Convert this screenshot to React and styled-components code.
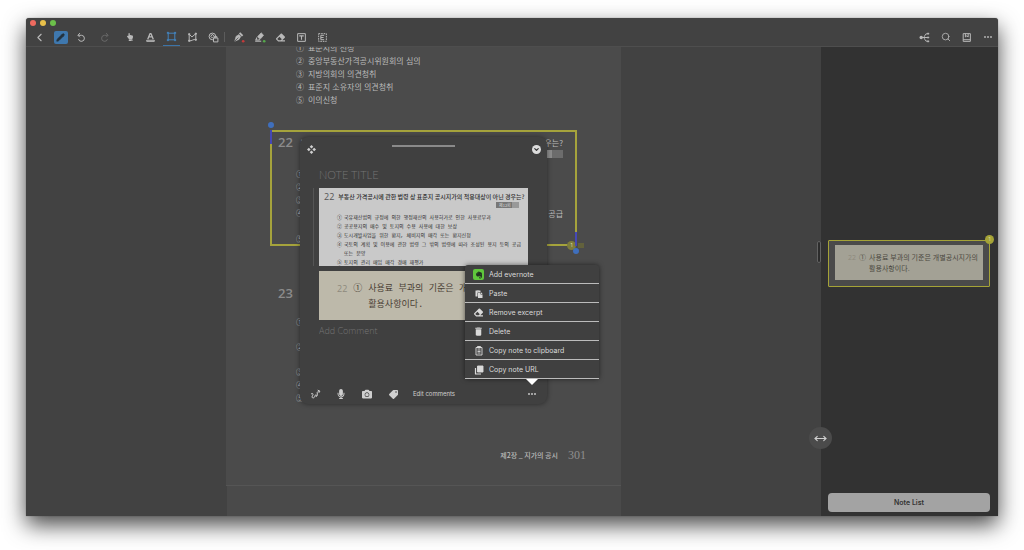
import styled, { createGlobalStyle } from "styled-components";
import {
  ChevronLeft,
  ChevronDown,
  Search,
  MoveHorizontal,
  Pencil,
} from "lucide-react";
import {
  FaCamera,
  FaEraser,
  FaEvernote,
  FaHandPointUp,
  FaMicrophone,
  FaPaste,
  FaTag,
} from "react-icons/fa";
import { MdDelete } from "react-icons/md";

const GlobalStyle = createGlobalStyle`
  * {
    box-sizing: border-box;
  }

  body {
    margin: 0;
    background: white;
    font-family: Inter, "Noto Sans CJK KR", sans-serif;
  }

  button, input, textarea {
    margin: 0;
    padding: 0;
    border: none;
    background: none;
    font: inherit;
    color: inherit;
  }

  button {
    cursor: pointer;
  }

  ol, ul, p, h1, h2 {
    margin: 0;
    padding: 0;
    list-style: none;
    font-weight: normal;
  }
`;

const pageFont = `"Liberation Sans", "Noto Sans CJK KR", sans-serif`;
const clippingFont = `"Liberation Mono", "Noto Sans CJK KR", sans-serif`;

const Desktop = styled.div`
  display: flex;
  min-height: 100vh;
  padding: 18px 26px 34px;
  overflow: hidden;
`;

const Window = styled.div`
  display: flex;
  flex-direction: column;
  flex: 1;
  min-width: 0;
  background: #424242;
  border-radius: 3px 3px 0 0;
  box-shadow: 0 0 1px rgba(0, 0, 0, 0.6), 0 9px 22px rgba(0, 0, 0, 0.72);
`;

/* Title bar and tools */

const Header = styled.header`
  border-bottom: 1px solid #4e4e4e;
`;

const TrafficLights = styled.div`
  display: flex;
  gap: 4px;
  height: 10px;
  padding: 2px 4px;
`;

const Light = styled.span`
  width: 6px;
  height: 6px;
  border-radius: 50%;
  background: ${({ color }) => color};
`;

const Toolbar = styled.nav`
  display: flex;
  align-items: center;
  height: 18px;
  padding-left: 3px;
`;

const ToolGroup = styled.div`
  display: flex;
  align-items: center;
  margin-left: ${({ $gap }) => $gap || 0}px;
`;

const Tool = styled.button`
  display: flex;
  align-items: center;
  justify-content: center;
  width: 21px;
  height: 18px;
  color: ${({ $faded }) => ($faded ? "#686868" : "#b9b9b9")};
`;

const SelectedTool = styled(Tool)`
  width: 17px;
  margin: 0 2px;
  border-bottom: 1px solid #3c74a8;
`;

const ActiveTool = styled.span`
  display: flex;
  align-items: center;
  justify-content: center;
  width: 14px;
  height: 13px;
  border-radius: 2px;
  background: #3f78ae;
  color: #24313c;
`;

const Separator = styled.span`
  width: 1px;
  height: 10px;
  background: #5c5c5c;
`;

const Grow = styled.div`
  flex: 1;
`;

/* Document */

const Main = styled.main`
  position: relative;
  display: flex;
  flex: 1;
  min-height: 0;
`;

const Canvas = styled.section`
  display: flex;
  flex: 1;
  justify-content: center;
  min-width: 0;
  overflow: hidden;
`;

const PageColumn = styled.div`
  display: flex;
  flex-direction: column;
  width: 395px;
`;

const Page = styled.article`
  position: relative;
  padding: 0 44px 22px;
  background: #4b4b4b;
  border-bottom: 1px solid #555;
  color: #bababa;
  font-family: ${pageFont};
  font-size: 8px;
  line-height: 13px;
`;

const NextPage = styled.div`
  flex: 1;
  margin-left: 1px;
  background: #4a4a4a;
`;

const Answers = styled.ol`
  margin: -5px 0 23px 26px;
`;

const Item = styled.li`
  display: flex;
  gap: 4px;
  white-space: nowrap;
`;

const Question = styled.section`
  position: relative;
  height: 116px;
  padding: 2px 12px 0 6px;
  border: 2px solid #a5a33c;
`;

const QuestionHead = styled.div`
  display: flex;
  align-items: center;
  gap: 7px;
  height: 16px;
`;

const QuestionNumber = styled.span`
  color: #8b8b8b;
  font-family: "Open Sans", sans-serif;
  font-size: 13px;
  font-weight: 600;
`;

const Justified = styled.p`
  flex: 1;
  font-family: "Noto Sans CJK KR", sans-serif;
  text-align: justify;
  text-align-last: justify;
`;

const PageBadge = styled.div`
  width: 44px;
  height: 8px;
  margin: 0 0 10px auto;
  background: linear-gradient(90deg, #8d8d8d 75%, #6c6c6c 75%);
`;

const QuestionOptions = styled.ol`
  padding-left: 18px;
`;

const NextQuestion = styled.section`
  height: 160px;
  margin-top: 39px;
  padding: 0 12px 0 8px;
`;

const NextOptions = styled.ol`
  display: grid;
  gap: 12px;
  margin: 15px 0 0 18px;
`;

const TightOptions = styled.ol`
  margin-left: 18px;
`;

const Handle = styled.span`
  position: absolute;
  width: 2px;
  height: 14px;
  background: #4548b5;
  ${({ $end }) => ($end ? "right: -2px; bottom: -2px;" : "left: -2px; top: -2px;")}

  &::after {
    content: "";
    position: absolute;
    left: -2px;
    ${({ $end }) => ($end ? "bottom: -8px;" : "top: -8px;")}
    width: 6px;
    height: 6px;
    border-radius: 50%;
    background: #3f6fbd;
  }
`;

const CountBadge = styled.span`
  position: absolute;
  right: ${({ $right }) => $right}px;
  ${({ $low }) => ($low ? "bottom: -6px;" : "top: -6px;")}
  width: 9px;
  height: 9px;
  border-radius: 50%;
  background: ${({ $low }) => ($low ? "#7d7c3c" : "#a5a337")};
  color: #d8d8a0;
  font: 5px/9px Inter, sans-serif;
  text-align: center;
`;

const CommentMark = styled.span`
  position: absolute;
  right: -9px;
  bottom: -4px;
  width: 6px;
  height: 5px;
  background: #62613c;
`;

const PageFooter = styled.footer`
  display: flex;
  align-items: center;
  justify-content: flex-end;
  gap: 10px;
  margin: 2px -9px 0 0;
  font-family: "Noto Sans CJK KR", sans-serif;
  font-size: 7px;
  font-weight: 500;
`;

const PageNumber = styled.span`
  color: #8f8f8f;
  font: 12px/16px "Liberation Serif", serif;
`;

/* Note popover */

const Note = styled.section`
  position: absolute;
  left: 74px;
  top: 90px;
  width: 247px;
  border-radius: 8px;
  background: #404040;
  box-shadow: 0 0 5px rgba(0, 0, 0, 0.45);
  color: #cfcfcf;
`;

const NoteHeader = styled.div`
  display: flex;
  align-items: center;
  justify-content: space-between;
  height: 24px;
  padding: 0 6px;
`;

const Grabber = styled.span`
  width: 63px;
  height: 2px;
  margin-bottom: 7px;
  background: #8a8a8a;
`;

const IconButton = styled.button`
  display: flex;
  align-items: center;
  justify-content: center;
  width: ${({ $width }) => $width || 10}px;
  height: 20px;
  color: #cfcfcf;
`;

const Collapse = styled.span`
  display: flex;
  align-items: center;
  justify-content: center;
  width: 9px;
  height: 9px;
  border-radius: 50%;
  background: #dcdcdc;
  color: #333;
`;

const NoteBody = styled.div`
  display: flex;
  flex-direction: column;
  padding: 0 19px;
`;

const TitleInput = styled.input`
  width: 100%;
  height: 27px;
  font: 300 11px/20px Lato, sans-serif;
  outline: none;

  &::placeholder {
    color: #747474;
    opacity: 1;
  }
`;

const CommentInput = styled.textarea`
  height: 64px;
  padding-top: 4px;
  font: 300 9px/14px "Open Sans", sans-serif;
  resize: none;
  outline: none;

  &::placeholder {
    color: #747474;
    opacity: 1;
  }
`;

const Excerpt = styled.div`
  height: 78px;
  margin-bottom: 5px;
  padding: 3px 3px 0 5px;
  background: #c9c9c9;
  box-shadow: -5px 0 0 #404040, -6px 0 0 #555;
  color: #2c2c2c;
  font-family: ${clippingFont};
  font-size: 5px;
  line-height: 9px;
`;

const ExcerptHead = styled.div`
  display: flex;
  align-items: center;
  gap: 4px;
  height: 12px;
  white-space: nowrap;
`;

const ExcerptNumber = styled.span`
  color: #555;
  font: 9px/12px "Open Sans", sans-serif;
`;

const ExcerptTitle = styled.h2`
  font: 500 6px/12px "Noto Sans CJK KR", sans-serif;
`;

const ExamTag = styled.div`
  width: 23px;
  height: 6px;
  margin: -1px 6px 6px auto;
  padding-left: 3px;
  background: linear-gradient(90deg, #777 70%, #999 70%);
  color: #ddd;
  font: 4px/6px "Noto Sans CJK KR", sans-serif;
`;

const ExcerptOptions = styled.ol`
  margin-left: 13px;

  ${Item} {
    gap: 2px;
  }
`;

const Clipping = styled.div`
  display: flex;
  gap: ${({ $small }) => ($small ? 3 : 6)}px;
  height: ${({ $small }) => ($small ? 35 : 49)}px;
  padding: ${({ $small }) => ($small ? "7px 0 0 13px" : "10px 0 0 18px")};
  overflow: hidden;
  background: ${({ $small }) => ($small ? "#a3a195" : "#bdb9aa")};
  color: ${({ $small }) => ($small ? "#4c4941" : "#4a4035")};
  font-family: ${({ $small }) => ($small ? pageFont : clippingFont)};
  font-size: ${({ $small }) => ($small ? 7 : 9)}px;
  line-height: ${({ $small }) => ($small ? 11 : 16)}px;
  white-space: nowrap;
`;

const ClippingNumber = styled.span`
  color: #8e8a7d;
  font-family: "Open Sans", sans-serif;
`;

const NoteTools = styled.div`
  display: flex;
  align-items: center;
  height: 20px;
  padding: 0 2px;
`;

const EditComments = styled.button`
  margin-left: 7px;
  font: 6px/12px Inter, sans-serif;
`;

const Menu = styled.ul`
  position: absolute;
  right: -52px;
  bottom: 25px;
  width: 134px;
  border-radius: 3px;
  background: #404040;
  box-shadow: 0 0 5px rgba(0, 0, 0, 0.55);

  &::after {
    content: "";
    position: absolute;
    left: 61px;
    top: 100%;
    border: 6px solid transparent;
    border-top-color: white;
    border-bottom: none;
  }
`;

const MenuItem = styled.li`
  height: 19px;
  border-bottom: 1px solid #bcbcbc;
`;

const MenuButton = styled.button`
  display: grid;
  grid-template-columns: 11px 1fr;
  align-items: center;
  justify-items: center;
  gap: 5px;
  width: 100%;
  height: 18px;
  padding: 1px 0 0 8px;
  color: #dadada;
  font: 7px/17px Inter, sans-serif;
`;

const MenuLabel = styled.span`
  justify-self: start;
`;

const EvernoteIcon = styled.span`
  display: flex;
  align-items: center;
  justify-content: center;
  width: 11px;
  height: 11px;
  border-radius: 2px;
  background: #5fc53c;
  color: #203020;
`;

/* Sidebar */

const Sidebar = styled.aside`
  display: flex;
  flex-direction: column;
  justify-content: space-between;
  width: 177px;
  padding: 193px 8px 4px 7px;
  background: #323232;
`;

const Card = styled.div`
  position: relative;
  padding: 4px 6px 6px;
  border: 1px solid #a5a337;
  border-radius: 1px;
  background: #4a4a4a;
`;

const NoteListButton = styled.button`
  height: 19px;
  border-radius: 4px;
  background: #a3a3a3;
  color: #333;
  font: 600 7px/19px Inter, sans-serif;
`;

const DragHandle = styled.span`
  position: absolute;
  right: 177px;
  top: 194px;
  width: 4px;
  height: 22px;
  border: 1px solid #626262;
  border-radius: 2px;
  background: #2c2c2c;
`;

const ResizeButton = styled.button`
  position: absolute;
  right: 166px;
  bottom: 67px;
  display: flex;
  align-items: center;
  justify-content: center;
  width: 23px;
  height: 22px;
  border-radius: 50%;
  background: #4b4b4b;
  color: #cfcfcf;
`;

const Icon = ({ size = 11, children }) => (
  <svg
    width={size}
    height={size}
    viewBox="0 0 20 20"
    fill="none"
    stroke="currentColor"
    strokeWidth="1.8"
    strokeLinejoin="round"
  >
    {children}
  </svg>
);

const UndoIcon = () => (
  <Icon>
    <path d="M4 6 H10 A5.500 5.500 0 1 1 4.500 13" />
    <path d="M7 2 L3.500 6 L7 9.500" />
  </Icon>
);

const RedoIcon = () => (
  <Icon>
    <path d="M16 6 H10 A5.500 5.500 0 1 0 15.500 13" />
    <path d="M13 2 L16.500 6 L13 9.500" />
  </Icon>
);

const HighlightIcon = () => (
  <Icon>
    <path d="M5 13 L9 3 H11 L15 13 M7 9 H13" strokeWidth="2.4" />
    <path d="M3 15 H17 V17 H3 Z" />
  </Icon>
);

const RectIcon = () => (
  <Icon>
    <g stroke="#4484bd">
      <path d="M4 4 H16 V16 H4 Z" />
      <path
        d="M2 2h3v3h-3z M15 2h3v3h-3z M2 15h3v3h-3z M15 15h3v3h-3z"
        fill="#4484bd"
        strokeWidth="0.6"
      />
    </g>
  </Icon>
);

const LassoIcon = () => (
  <Icon>
    <path d="M4 4 L9 9 L16 3 V14 C12 12 9 17 4 16 Z" />
    <path d="M3 3h2v2h-2z M15 2h2v2h-2z M3 15h2v2h-2z M15 13h2v2h-2z" fill="currentColor" />
  </Icon>
);

const ShapesIcon = () => (
  <Icon>
    <circle cx="8" cy="8" r="6" />
    <path d="M5 8 L8 4 L11 8 L8 11 Z" />
    <path d="M10 11 H18 V18 H10 Z" fill="#424242" />
    <path d="M12 11 V8 H16 V11" />
  </Icon>
);

const PenIcon = () => (
  <Icon size={12}>
    <path d="M3 17 L5 9 L10 6 L13 9 L10 14 Z" fill="currentColor" strokeWidth="1" />
    <path d="M11 3 L16 8" strokeWidth="3" />
    <path d="M3 17 L9 11" stroke="#424242" strokeWidth="1.2" />
    <circle cx="17" cy="17" r="2.200" fill="#c33b3b" stroke="none" />
  </Icon>
);

const MarkerIcon = () => (
  <Icon size={12}>
    <path d="M6 9 L12 3 L16 7 L11 13 L8 12 Z" fill="currentColor" strokeWidth="1" />
    <path d="M5 11 L3 15 H8 L10 14" />
    <path d="M2 17 H12" />
    <circle cx="17" cy="17" r="2.200" fill="#56a84c" stroke="none" />
  </Icon>
);

const TextBoxIcon = () => (
  <Icon>
    <path d="M3 3 H17 V17 H3 Z" />
    <path d="M6 7 H14 M10 7 V14" strokeWidth="2" />
  </Icon>
);

const ExcerptBoxIcon = () => (
  <Icon>
    <path d="M3 3 H17 V17 H3 Z" strokeDasharray="3 1.5" />
    <path d="M13 6 H7 V14 H13 M7 10 H12" />
  </Icon>
);

const MindMapIcon = () => (
  <Icon>
    <circle cx="4" cy="10" r="3" fill="currentColor" stroke="none" />
    <path d="M5 10 H16 M15 3 C10 3 11 9 8 10 C11 11 10 17 15 17" />
    <path
      d="M15 2h3v2h-3z M15 9h3v2h-3z M15 16h3v2h-3z"
      fill="currentColor"
      strokeWidth="1"
    />
  </Icon>
);

const BookIcon = () => (
  <Icon>
    <path d="M4 3 H17 V17 H4 Z M4 14 H17" />
    <path d="M8 3 V9 L10.500 7 L13 9 V3" />
  </Icon>
);

const DotsIcon = ({ size }) => (
  <Icon size={size}>
    <g fill="currentColor" stroke="none">
      <circle cx="2.500" cy="10" r="2.300" />
      <circle cx="10" cy="10" r="2.300" />
      <circle cx="17.500" cy="10" r="2.300" />
    </g>
  </Icon>
);

const MoveIcon = () => (
  <Icon size={9}>
    <g fill="currentColor" stroke="none">
      <path d="M10 0 L14 4 L10 8 L6 4 Z M10 20 L14 16 L10 12 L6 16 Z" />
      <path d="M0 10 L4 6 L8 10 L4 14 Z M20 10 L16 6 L12 10 L16 14 Z" />
    </g>
  </Icon>
);

const ScribbleIcon = () => (
  <Icon>
    <path d="M2 9 C5 7 7 9 4 13 C3 17 7 18 9 13 C10 9 13 10 11 13 C11 15 15 12 13 7 C13 5 15 4 17 4" />
    <path d="M14 2 L18 4 L16 7" />
  </Icon>
);

const ClipboardIcon = () => (
  <Icon size={10}>
    <path d="M4 3 H16 V18 H4 Z" />
    <path d="M7 1 H13 V4 H7 Z" fill="currentColor" />
    <path d="M7 8 H13 M7 11 H13 M7 14 H13" />
  </Icon>
);

const CopyIcon = () => (
  <Icon size={10}>
    <path d="M7 2 H18 V14 H7 Z" fill="currentColor" />
    <path d="M3 6 V18 H14" strokeWidth="2.4" />
  </Icon>
);

const FlippedTag = styled(FaTag)`
  transform: scaleX(-1);
`;

const previousAnswers = [
  ["①", "표준지의 선정"],
  ["②", "중앙부동산가격공시위원회의 심의"],
  ["③", "지방의회의 의견청취"],
  ["④", "표준지 소유자의 의견청취"],
  ["⑤", "이의신청"],
];

const questionTitle =
  "부동산 가격공시에 관한 법령 상 표준지 공시지가의 적용대상이 아닌 경우는?";

const options = [
  ["①", "국유재산법의 규정에 의한 행정재산의 사용허가로 인한 사용료부과"],
  ["②", "공공용지의 매수 및 토지의 수용 사용에 대한 보상"],
  ["③", "도시개발사업을 위한 환지, 체비지의 매각 또는 환지신청"],
  ["④", "국토의 계획 및 이용에 관한 법령 그 밖의 법령에 따라 조성된 용지 등의 공급"],
  ["\u3000", "또는 분양"],
  ["⑤", "토지의 관리 매입 매각 경매 재평가"],
];

const menuItems = [
  { label: "Add evernote", icon: <EvernoteIcon><FaEvernote size={8} /></EvernoteIcon> },
  { label: "Paste", icon: <FaPaste size={8} /> },
  { label: "Remove excerpt", icon: <FaEraser size={9} /> },
  { label: "Delete", icon: <MdDelete size={11} /> },
  { label: "Copy note to clipboard", icon: <ClipboardIcon /> },
  { label: "Copy note URL", icon: <CopyIcon /> },
];

const AppHeader = () => (
  <Header>
    <TrafficLights>
      <Light color="#ee6a5f" />
      <Light color="#e8c04a" />
      <Light color="#6cc04a" />
    </TrafficLights>
    <Toolbar>
      <Tool aria-label="Back"><ChevronLeft size={13} strokeWidth={2} /></Tool>
      <Tool aria-label="Edit">
        <ActiveTool><Pencil size={9} fill="currentColor" /></ActiveTool>
      </Tool>
      <Tool aria-label="Undo"><UndoIcon /></Tool>
      <ToolGroup $gap={2}>
        <Tool aria-label="Redo" $faded><RedoIcon /></Tool>
      </ToolGroup>
      <ToolGroup $gap={4}>
        <Tool aria-label="Hand"><FaHandPointUp size={8} /></Tool>
        <Tool aria-label="Highlight text"><HighlightIcon /></Tool>
        <SelectedTool aria-label="Rectangle excerpt"><RectIcon /></SelectedTool>
        <Tool aria-label="Lasso excerpt"><LassoIcon /></Tool>
        <Tool aria-label="Shapes"><ShapesIcon /></Tool>
      </ToolGroup>
      <Separator />
      <ToolGroup $gap={3}>
        <Tool aria-label="Pen"><PenIcon /></Tool>
        <Tool aria-label="Marker"><MarkerIcon /></Tool>
        <Tool aria-label="Eraser"><FaEraser size={9} /></Tool>
        <Tool aria-label="Text box"><TextBoxIcon /></Tool>
        <Tool aria-label="Blank excerpt"><ExcerptBoxIcon /></Tool>
      </ToolGroup>
      <Grow />
      <Tool aria-label="Mind map"><MindMapIcon /></Tool>
      <Tool aria-label="Search"><Search size={10} /></Tool>
      <Tool aria-label="Contents"><BookIcon /></Tool>
      <Tool aria-label="More"><DotsIcon size={8} /></Tool>
    </Toolbar>
  </Header>
);

const NotePopover = () => (
  <Note>
    <NoteHeader>
      <IconButton aria-label="Move note"><MoveIcon /></IconButton>
      <Grabber />
      <IconButton aria-label="Collapse note">
        <Collapse><ChevronDown size={7} strokeWidth={4} /></Collapse>
      </IconButton>
    </NoteHeader>
    <NoteBody>
      <TitleInput aria-label="Note title" placeholder="NOTE TITLE" />
      <Excerpt>
        <ExcerptHead>
          <ExcerptNumber>22</ExcerptNumber>
          <ExcerptTitle>{questionTitle}</ExcerptTitle>
        </ExcerptHead>
        <ExamTag>제12회</ExamTag>
        <ExcerptOptions>
          {options.map(([mark, text]) => (
            <Item key={text}><span>{mark}</span><span>{text}</span></Item>
          ))}
        </ExcerptOptions>
      </Excerpt>
      <Clipping>
        <ClippingNumber>22</ClippingNumber>
        <span>①</span>
        <p>사용료 부과의 기준은 개별공시지가의<br />활용사항이다.</p>
      </Clipping>
      <CommentInput aria-label="Comment" placeholder="Add Comment" />
    </NoteBody>
    <NoteTools>
      <IconButton $width={26} aria-label="Draw"><ScribbleIcon /></IconButton>
      <IconButton $width={26} aria-label="Record"><FaMicrophone size={10} /></IconButton>
      <IconButton $width={26} aria-label="Camera"><FaCamera size={10} /></IconButton>
      <IconButton $width={26} aria-label="Tag"><FlippedTag size={9} /></IconButton>
      <EditComments>Edit comments</EditComments>
      <Grow />
      <IconButton $width={26} aria-label="More"><DotsIcon size={8} /></IconButton>
    </NoteTools>
    <Menu>
      {menuItems.map(({ label, icon }) => (
        <MenuItem key={label}>
          <MenuButton>
            {icon}
            <MenuLabel>{label}</MenuLabel>
          </MenuButton>
        </MenuItem>
      ))}
    </Menu>
  </Note>
);

const BookPage = () => (
  <Page>
    <Answers>
      {previousAnswers.map(([mark, text]) => (
        <Item key={mark}><span>{mark}</span><span>{text}</span></Item>
      ))}
    </Answers>
    <Question>
      <Handle />
      <QuestionHead>
        <QuestionNumber>22</QuestionNumber>
        <Justified>{questionTitle}</Justified>
      </QuestionHead>
      <PageBadge />
      <QuestionOptions>
        {options.map(([mark, text], i) => (
          <Item key={text}>
            <span>{mark}</span>
            {i === 3 ? <Justified>{text}</Justified> : <span>{text}</span>}
          </Item>
        ))}
      </QuestionOptions>
      <CountBadge $low $right={-1}>1</CountBadge>
      <CommentMark />
      <Handle $end />
    </Question>
    <NextQuestion>
      <QuestionHead>
        <QuestionNumber>23</QuestionNumber>
        <p>부동산<br />한다</p>
      </QuestionHead>
      <NextOptions>
        {["①", "②", "③"].map((mark) => <li key={mark}>{mark}</li>)}
      </NextOptions>
      <TightOptions>
        <li>④</li>
        <li>⑤</li>
      </TightOptions>
    </NextQuestion>
    <PageFooter>
      <span>제2장 _ 지가의 공시</span>
      <PageNumber>301</PageNumber>
    </PageFooter>
    <NotePopover />
  </Page>
);

const App = () => (
  <>
    <GlobalStyle />
    <Desktop>
      <Window>
        <AppHeader />
        <Main>
          <Canvas>
            <PageColumn>
              <BookPage />
              <NextPage />
            </PageColumn>
          </Canvas>
          <Sidebar>
            <Card>
              <Clipping $small>
                <ClippingNumber>22</ClippingNumber>
                <span>①</span>
                <p>사용료 부과의 기준은 개별공시지가의<br />활용사항이다.</p>
              </Clipping>
              <CountBadge $right={-5}>1</CountBadge>
            </Card>
            <NoteListButton>Note List</NoteListButton>
          </Sidebar>
          <DragHandle />
          <ResizeButton aria-label="Resize panels"><MoveHorizontal size={13} /></ResizeButton>
        </Main>
      </Window>
    </Desktop>
  </>
);

export default App;
